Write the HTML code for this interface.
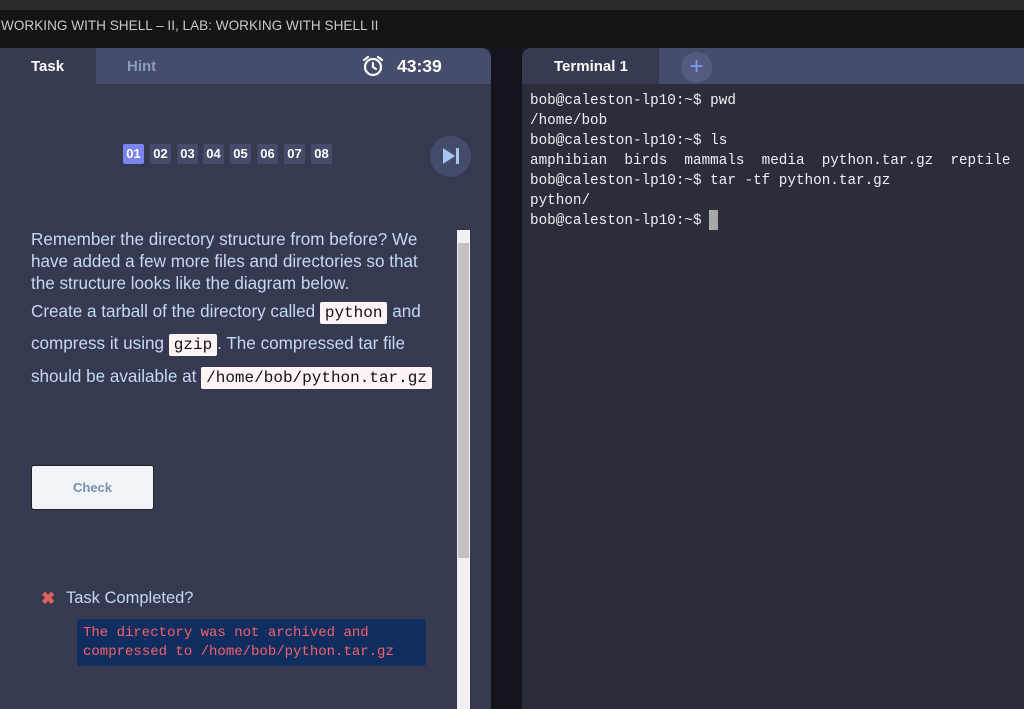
<!DOCTYPE html>
<html><head><style>
*{margin:0;padding:0;box-sizing:border-box}
body{width:1024px;height:709px;overflow:hidden;background:#1a1c26;font-family:"Liberation Sans",sans-serif;position:relative}
.abs{position:absolute}
.mono{font-family:"Liberation Mono",monospace}
.num{position:absolute;top:144px;width:21px;height:20px;background:#454b69;color:#fff;font-size:13px;font-weight:bold;text-align:center;line-height:20px;border-radius:2px}
.p{position:absolute;left:31px;color:#c6d8f2;font-size:17.1px;white-space:nowrap}
.code{background:#fff5f7;color:#111;font-family:"Liberation Mono",monospace;font-size:16px;padding:2px 5px;border-radius:2px}
.t{position:absolute;left:530px;color:#eef0f5;font-size:14.3px;font-family:"Liberation Mono",monospace;white-space:pre}
</style></head><body>
<div class="abs" style="left:0;top:0;width:1024px;height:10px;background:#2a2a2a"></div>
<div class="abs" style="left:0;top:10px;width:1024px;height:38px;background:#141414"></div>
<div class="abs" style="left:1px;top:18px;color:#c8c8c8;font-size:13.6px">WORKING WITH SHELL – II, LAB: WORKING WITH SHELL II</div>
<div class="abs" style="left:491px;top:48px;width:31px;height:661px;background:#13141c"></div>
<div class="abs" style="left:0;top:48px;width:491px;height:661px;background:#363a50;border-top-right-radius:10px;overflow:hidden">
 <div class="abs" style="left:0;top:0;width:491px;height:36px;background:#464c6b"></div>
 <div class="abs" style="left:0;top:0;width:96px;height:36px;background:#373b51"></div>
</div>
<div class="abs" style="left:31px;top:58px;color:#fff;font-weight:bold;font-size:15px">Task</div>
<div class="abs" style="left:127px;top:58px;color:#8a9bbb;font-weight:bold;font-size:15px">Hint</div>
<svg class="abs" style="left:361px;top:54px" width="24" height="24" viewBox="0 0 24 24" fill="none" stroke="#fff" stroke-width="2.2" stroke-linecap="round"><circle cx="12" cy="13" r="8"/><path d="M12 9v4l3 2M3 6l4-3M21 6l-4-3"/></svg>
<div class="abs" style="left:397px;top:56px;color:#fff;font-weight:bold;font-size:17.5px">43:39</div>
<div class="num" style="left:123px;background:#7a83f0">01</div>
<div class="num" style="left:150px">02</div>
<div class="num" style="left:177px">03</div>
<div class="num" style="left:203px">04</div>
<div class="num" style="left:230px">05</div>
<div class="num" style="left:257px">06</div>
<div class="num" style="left:284px">07</div>
<div class="num" style="left:311px">08</div>
<div class="abs" style="left:430px;top:136px;width:41px;height:41px;border-radius:50%;background:#444b6b"></div>
<svg class="abs" style="left:441px;top:146px" width="20" height="20" viewBox="0 0 20 20"><path d="M2 2L14 10L2 18Z" fill="#a9c6f0"/><rect x="15" y="2" width="3" height="16" fill="#a9c6f0"/></svg>
<div class="p" style="top:230px">Remember the directory structure from before? We</div>
<div class="p" style="top:252px">have added a few more files and directories so that</div>
<div class="p" style="top:274px">the structure looks like the diagram below.</div>
<div class="p" style="top:302px">Create a tarball of the directory called <span class="code">python</span> and</div>
<div class="p" style="top:334px">compress it using <span class="code">gzip</span>. The compressed tar file</div>
<div class="p" style="top:367px">should be available at <span class="code">/home/bob/python.tar.gz</span></div>
<div class="abs" style="left:457px;top:230px;width:13px;height:479px;background:#f1f1f1"></div>
<div class="abs" style="left:458px;top:243px;width:11px;height:315px;background:#c1c1c1"></div>
<div class="abs" style="left:31px;top:465px;width:123px;height:45px;background:#f0f5fa;border:1px solid #222;border-radius:3px;color:#7b8fac;font-weight:bold;font-size:13px;text-align:center;line-height:43px">Check</div>
<div class="abs" style="left:41px;top:589px;color:#e0635a;font-size:17px;font-weight:bold">✖</div>
<div class="abs" style="left:66px;top:589px;color:#c6d8f2;font-size:16.5px">Task Completed?</div>
<div class="abs mono" style="left:77px;top:619px;width:349px;height:47px;background:#0f2d5e;border-radius:3px;color:#f5636b;font-size:14px;line-height:19px;padding:5px 6px;white-space:pre">The directory was not archived and
compressed to /home/bob/python.tar.gz</div>
<div class="abs" style="left:522px;top:48px;width:502px;height:661px;background:#2b2d3b;border-top-left-radius:10px;overflow:hidden">
 <div class="abs" style="left:0;top:0;width:502px;height:36px;background:#464c6b"></div>
 <div class="abs" style="left:0;top:0;width:137px;height:36px;background:#373b51"></div>
</div>
<div class="abs" style="left:554px;top:58px;color:#fff;font-weight:bold;font-size:15px">Terminal 1</div>
<div class="abs" style="left:681px;top:52px;width:31px;height:31px;border-radius:50%;background:#545b80;color:#7f9cf5;font-size:24px;text-align:center;line-height:29px">+</div>
<div class="t" style="top:93px">bob@caleston-lp10:~$ pwd</div>
<div class="t" style="top:113px">/home/bob</div>
<div class="t" style="top:133px">bob@caleston-lp10:~$ ls</div>
<div class="t" style="top:153px">amphibian  birds  mammals  media  python.tar.gz  reptile</div>
<div class="t" style="top:173px">bob@caleston-lp10:~$ tar -tf python.tar.gz</div>
<div class="t" style="top:193px">python/</div>
<div class="t" style="top:213px">bob@caleston-lp10:~$ </div>
<div class="abs" style="left:709px;top:210px;width:9px;height:20px;background:#a8a8a8"></div>
</body></html>
